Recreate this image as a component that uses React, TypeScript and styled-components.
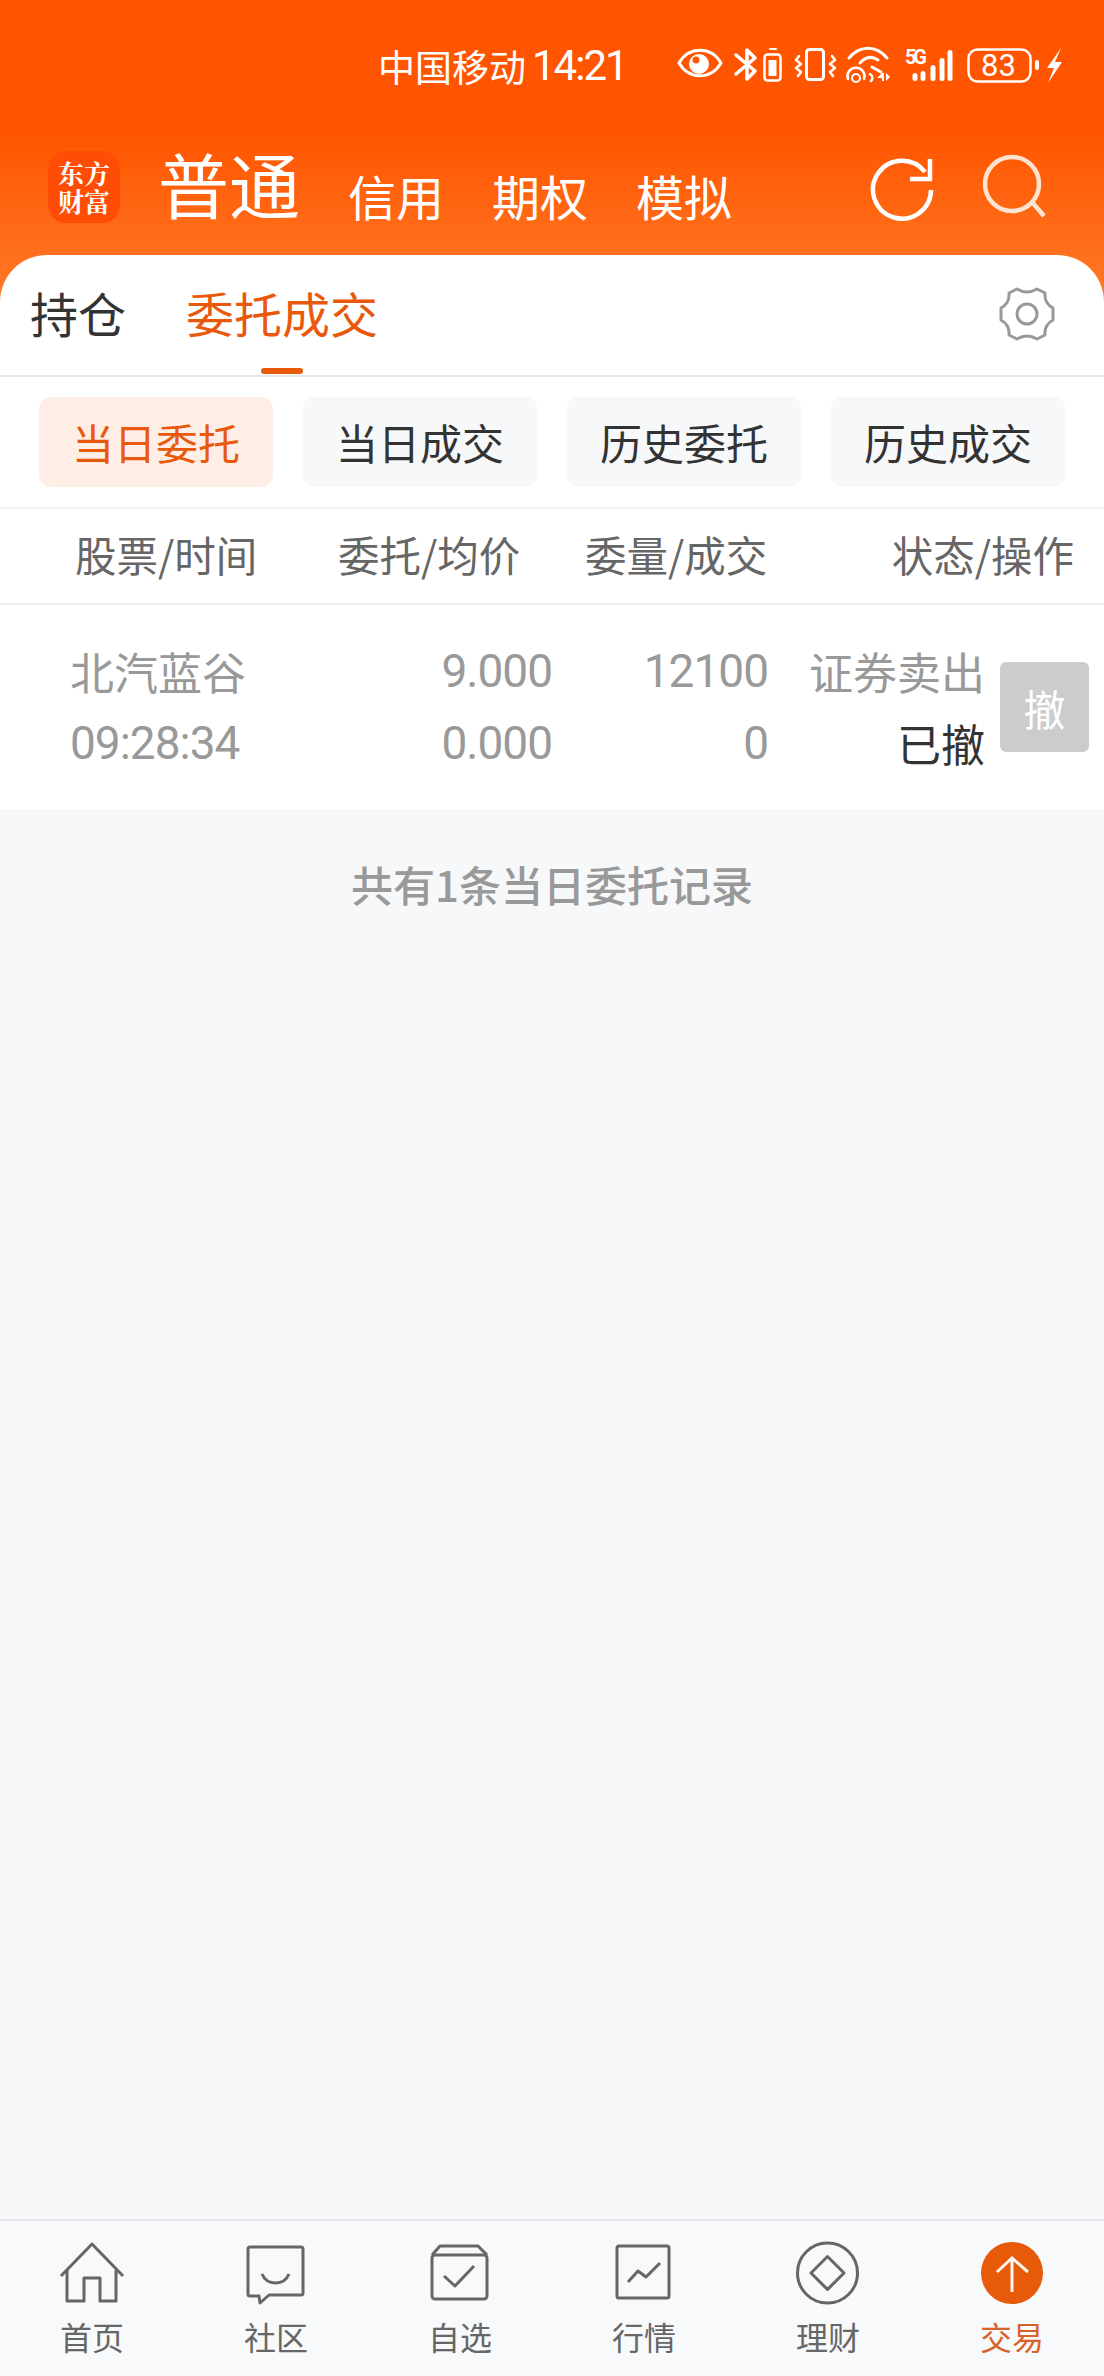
import React from 'react';
import styled, { createGlobalStyle } from 'styled-components';

const FONT = `"Noto Sans CJK SC", "Noto Sans", sans-serif`;
const NUM = `Roboto, "Noto Sans CJK SC", sans-serif`;

const Global = createGlobalStyle`
  html, body { margin: 0; padding: 0; background: #f7f8fa; }
  body { font-family: ${FONT}; }
  * { box-sizing: border-box; }
`;

const Page = styled.div`
  width: 1104px;
  height: 2376px;
  display: flex;
  flex-direction: column;
  background: #f7f8fa;
  overflow: hidden;
`;

const Hero = styled.header`
  height: 303px;
  margin-bottom: -48px;
  padding-top: 36px;
  background: linear-gradient(180deg, #ff5500 0%, #ff5500 43%, #ff7a28 100%);
  display: flex;
  flex-direction: column;
`;

const StatusBar = styled.div`
  height: 60px;
  display: flex;
  align-items: center;
  color: #fff;
  padding: 0 34px 0 378px;
`;

const Carrier = styled.span`
  font-size: 37px;
  line-height: 60px;
`;

const Clock = styled.span`
  font-family: ${NUM};
  font-size: 42px;
  letter-spacing: -2px;
  line-height: 60px;
  margin-left: 6px;
`;

const StatusIcons = styled.svg`
  margin: 0 0 6px auto;
  flex: none;
  overflow: visible;
`;

const NavRow = styled.nav`
  display: flex;
  align-items: flex-end;
  height: 72px;
  margin-top: 55px;
  padding-left: 48px;
  color: #fff;
`;

const Logo = styled.div`
  width: 72px;
  height: 72px;
  padding: 8px 9px;
  border-radius: 18px;
  background: #ff4d05;
  color: #fff;
  font-family: "Noto Serif CJK SC", serif;
  font-weight: 700;
  font-size: 26px;
  line-height: 28px;
  text-align: center;
`;

const MainTab = styled.span`
  font-size: 71px;
  line-height: 72px;
  margin: 0 0 5px 38px;
`;

const SubTab = styled.span`
  font-size: 48px;
  line-height: 50px;
  margin: 0 0 3px 48px;
`;

const HeroActions = styled.div`
  margin: 2px 57px 0 auto;
  display: flex;
  gap: 47px;
  align-self: flex-start;
`;

const Sheet = styled.section`
  position: relative;
  background: #fff;
  border-radius: 47px 47px 0 0;
`;

const TabBar = styled.div`
  height: 122px;
  display: flex;
  align-items: center;
  padding: 0 49px 2px 30px;
  border-bottom: 2px solid #e6e6e8;
`;

const TopTab = styled.span<{ $active?: boolean }>`
  position: relative;
  font-size: 48px;
  line-height: 60px;
  margin: 0 60px 4px 0;
  color: ${p => (p.$active ? '#e8590c' : '#333')};
`;

const Underline = styled.i`
  position: absolute;
  left: 75px;
  bottom: -32px;
  width: 42px;
  height: 6px;
  border-radius: 3px;
  background: #e8590c;
`;

const Gear = styled.svg`
  margin-left: auto;
`;

const Filters = styled.div`
  height: 132px;
  display: grid;
  grid-template-columns: repeat(4, 234px);
  justify-content: space-between;
  align-items: center;
  padding: 0 39px;
  border-bottom: 2px solid #f3f3f5;
`;

const Filter = styled.button<{ $active?: boolean }>`
  height: 90px;
  border: 0;
  border-radius: 12px;
  padding: 0 0 2px;
  font-family: ${FONT};
  font-size: 42px;
  background: ${p => (p.$active ? '#ffeee6' : '#f7f8fa')};
  color: ${p => (p.$active ? '#e8590c' : '#333')};
`;

const HeadRow = styled.div`
  height: 96px;
  display: flex;
  align-items: center;
  padding: 0 30px 4px 75px;
  border-bottom: 2px solid #efeff1;
  color: #666;
  font-size: 41.5px;
`;

const HeadCell = styled.span<{ $w?: number }>`
  width: ${p => (p.$w ? `${p.$w}px` : 'auto')};
  margin-left: ${p => (p.$w ? '0' : 'auto')};
  white-space: nowrap;
`;

const OrderRow = styled.div`
  height: 204px;
  display: flex;
  align-items: center;
  padding-left: 70px;
  font-size: 44px;
  color: #999;
`;

const Cell = styled.div<{ $w: number; $right?: boolean }>`
  width: ${p => p.$w}px;
  flex: none;
  display: flex;
  flex-direction: column;
  line-height: 72px;
  white-space: nowrap;
  align-items: ${p => (p.$right ? 'flex-end' : 'flex-start')};
`;

const Num = styled.span`
  font-family: ${NUM};
  font-size: 46px;
  letter-spacing: -1px;
`;

const Done = styled.span`
  color: #333;
`;

const Cancel = styled.button`
  width: 89px;
  height: 90px;
  margin-left: 15px;
  border: 0;
  border-radius: 6px;
  padding: 0;
  background: #ccc;
  color: #fff;
  font-family: ${FONT};
  font-size: 42px;
`;

const Summary = styled.div`
  margin-top: 45px;
  text-align: center;
  font-size: 42px;
  font-weight: 500;
  line-height: 60px;
  color: #999;
`;

const Spacer = styled.div`
  flex: 1;
`;

const Dock = styled.footer`
  height: 157px;
  border-top: 2px solid #e6e8ec;
  background: #f8f9fb;
  display: grid;
  grid-template-columns: repeat(6, 1fr);
`;

const DockItem = styled.div<{ $active?: boolean }>`
  display: flex;
  flex-direction: column;
  align-items: center;
  padding-top: 20px;
  font-size: 32px;
  line-height: 40px;
  color: ${p => (p.$active ? '#d9622a' : '#666')};
  svg { display: block; margin-bottom: 11px; }
`;

const stroke = { fill: 'none', stroke: '#666', strokeWidth: 3, strokeLinejoin: 'round' as const };

const HomeIcon = () => (
  <svg width="66" height="64" viewBox="0 0 66 64">
    <g {...stroke}>
      <path d="M2 35 33 3 64 35" />
      <path d="M8 29V60H25V37H41V60H57V29" />
    </g>
  </svg>
);
const ChatIcon = () => (
  <svg width="66" height="64" viewBox="0 0 66 64">
    <g {...stroke}>
      <path d="M7 6H58a2 2 0 0 1 2 2V52a2 2 0 0 1-2 2H26L17 62 16 55H7a2 2 0 0 1-2-2V8a2 2 0 0 1 2-2Z" />
      <path d="M19 33c5 12 22 12 27 0" />
    </g>
  </svg>
);
const BoxIcon = () => (
  <svg width="66" height="64" viewBox="0 0 66 64">
    <g {...stroke}>
      <rect x="5" y="14" width="55" height="44" rx="3" />
      <path d="M5 14 13 5H51L60 14" />
      <path d="M17 35 28 45 47 25" />
    </g>
  </svg>
);
const ChartIcon = () => (
  <svg width="66" height="64" viewBox="0 0 66 64">
    <g {...stroke}>
      <rect x="6" y="5" width="52" height="52" rx="2" />
      <path d="M17 41 27 30 35 36 49 22" />
    </g>
  </svg>
);
const DiamondIcon = () => (
  <svg width="66" height="64" viewBox="0 0 66 64">
    <g {...stroke}>
      <circle cx="32.5" cy="32" r="30" />
      <path d="M32.5 15.500 49 32 32.500 48.500 16 32Z" />
    </g>
  </svg>
);
const TradeIcon = () => (
  <svg width="66" height="64" viewBox="0 0 66 64">
    <circle cx="33" cy="32" r="31" fill="#e65a0a" />
    <path d="M33 51V17M18 31 33 17 49 31" fill="none" stroke="#fff6ee" strokeWidth="3" />
  </svg>
);

export default function App() {
  return (
    <Page>
      <Global />
      <Hero>
        <StatusBar>
          <Carrier>中国移动</Carrier>
          <Clock>14:21</Clock>
          <StatusIcons width="400" height="50" viewBox="670 40 400 50">
            <g fill="none" stroke="#fff" strokeLinecap="round" strokeLinejoin="round">
              <path d="M679 65C689 48 711 48 721 65 711 82 689 82 679 65Z" strokeWidth="3" />
              <path d="M736 57 755 73 747 81V52L755 60 736 76" strokeWidth="3.500" />
              <rect x="764.500" y="56.500" width="16" height="26" rx="3" strokeWidth="2.500" />
              <path d="M770 51H776" strokeWidth="2" />
              <rect x="806.500" y="51.500" width="17" height="30" rx="3" strokeWidth="3" />
              <path d="M799 58 796 62 801 66 796 70 801 74 798 78M832 58 835 62 830 66 835 70 830 74 833 78" strokeWidth="2.500" />
              <path d="M849 60C860 47 876 47 887 60" strokeWidth="3" />
              <path d="M860 65C866 58 872 58 878 62M872 69 881 74" strokeWidth="3" />
              <path d="M848 81A8.500 8.500 0 1 1 864 81" strokeWidth="2.500" />
              <path d="M852 80A4 4 0 1 1 860 80 4 4 0 1 1 852 80Z" strokeWidth="2" />
              <path d="M870 76C873 78 873 81 871 83" strokeWidth="2.500" />
              <rect x="968.500" y="51.500" width="62" height="32" rx="9" strokeWidth="2.500" />
            </g>
            <g fill="#fff">
              <circle cx="699" cy="66" r="10" />
              <circle cx="696" cy="62" r="3.500" fill="#ff5500" />
              <rect x="768.500" y="62" width="8" height="16" />
              <path d="M882 75 877 80H882V83H884V75ZM886 75V83L890 79Z" />
              <text x="905" y="66" fontFamily="Roboto, sans-serif" fontSize="20" fontWeight="700" textLength="22">5G</text>
              <rect x="912.500" y="75" width="5" height="8" rx="2.500" />
              <rect x="920.500" y="73" width="5" height="10" rx="2.500" />
              <rect x="930.500" y="67" width="5" height="16" rx="2.500" />
              <rect x="939.500" y="60" width="5" height="23" rx="2.500" />
              <rect x="947.500" y="52" width="5" height="31" rx="2.500" />
              <rect x="1035" y="62" width="4" height="10" rx="2" />
              <path d="M1061 50 1047 70H1054L1048 85 1062 64H1055Z" />
              <text x="998.500" y="78" textAnchor="middle" fontFamily="Roboto, sans-serif" fontSize="31">83</text>
            </g>
          </StatusIcons>
        </StatusBar>
        <NavRow>
          <Logo>东方财富</Logo>
          <MainTab>普通</MainTab>
          <SubTab>信用</SubTab>
          <SubTab>期权</SubTab>
          <SubTab>模拟</SubTab>
          <HeroActions>
            <svg width="66" height="70" viewBox="0 0 66 70" fill="none" stroke="#fff" strokeWidth="4.500">
              <path d="M63 37A29 29 0 1 1 57 19" />
              <path d="M62 6V26H42" />
            </svg>
            <svg width="66" height="70" viewBox="0 0 66 70" fill="none" stroke="#fde4d2" strokeWidth="4.500">
              <circle cx="31" cy="31" r="27" />
              <path d="M51 49 63 63" />
            </svg>
          </HeroActions>
        </NavRow>
      </Hero>
      <Sheet>
        <TabBar>
          <TopTab>持仓</TopTab>
          <TopTab $active>委托成交<Underline /></TopTab>
          <Gear width="56" height="56" viewBox="0 0 56 56" fill="none" stroke="#999" strokeWidth="3" strokeLinejoin="round">
            <path d="M18 3Q28 9 38 3L46 7Q45 17 54 22V34Q45 39 46 49L38 53Q28 47 18 53L10 49Q11 39 2 34V22Q11 17 10 7Z" />
            <circle cx="28" cy="28" r="10" />
          </Gear>
        </TabBar>
        <Filters>
          <Filter $active>当日委托</Filter>
          <Filter>当日成交</Filter>
          <Filter>历史委托</Filter>
          <Filter>历史成交</Filter>
        </Filters>
        <HeadRow>
          <HeadCell $w={263}>股票/时间</HeadCell>
          <HeadCell $w={247}>委托/均价</HeadCell>
          <HeadCell $w={250}>委量/成交</HeadCell>
          <HeadCell>状态/操作</HeadCell>
        </HeadRow>
        <OrderRow>
          <Cell $w={200}>
            <span>北汽蓝谷</span>
            <Num>09:28:34</Num>
          </Cell>
          <Cell $w={282} $right>
            <Num>9.000</Num>
            <Num>0.000</Num>
          </Cell>
          <Cell $w={216} $right>
            <Num>12100</Num>
            <Num>0</Num>
          </Cell>
          <Cell $w={217} $right>
            <span>证券卖出</span>
            <Done>已撤</Done>
          </Cell>
          <Cancel>撤</Cancel>
        </OrderRow>
      </Sheet>
      <Summary>共有1条当日委托记录</Summary>
      <Spacer />
      <Dock>
        <DockItem><HomeIcon />首页</DockItem>
        <DockItem><ChatIcon />社区</DockItem>
        <DockItem><BoxIcon />自选</DockItem>
        <DockItem><ChartIcon />行情</DockItem>
        <DockItem><DiamondIcon />理财</DockItem>
        <DockItem $active><TradeIcon />交易</DockItem>
      </Dock>
    </Page>
  );
}
